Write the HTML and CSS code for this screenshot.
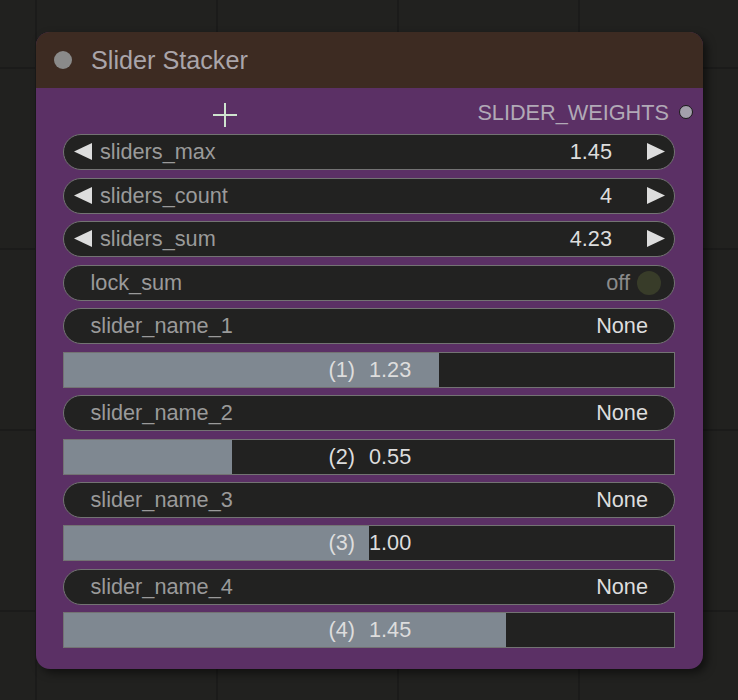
FILE: index.html
```html
<!DOCTYPE html>
<html>
<head>
<meta charset="utf-8">
<link rel="stylesheet" href="styles.css">
</head>
<body>
<div class="canvas">
  <div class="node">
    <div class="title">
      <span class="title-dot"></span>
      <span class="title-text">Slider Stacker</span>
    </div>
    <div class="body">
      <div class="slot-row">
        <svg class="plus" width="24" height="24" viewBox="0 0 24 24"><path d="M12 0V24M0 12H24" stroke="#cfe3cf" stroke-width="2"/></svg>
        <span class="out-label">SLIDER_WEIGHTS</span>
        <span class="out-dot"></span>
      </div>

      <div class="pill number">
        <svg class="arrow" width="18" height="18" viewBox="0 0 18 18"><polygon points="18,0 18,17 0,8.5" fill="#ddd"/></svg>
        <span class="label">sliders_max</span>
        <span class="value">1.45</span>
        <svg class="arrow right" width="18" height="18" viewBox="0 0 18 18"><polygon points="0,0 0,17 18,8.5" fill="#ddd"/></svg>
      </div>
      <div class="pill number">
        <svg class="arrow" width="18" height="18" viewBox="0 0 18 18"><polygon points="18,0 18,17 0,8.5" fill="#ddd"/></svg>
        <span class="label">sliders_count</span>
        <span class="value">4</span>
        <svg class="arrow right" width="18" height="18" viewBox="0 0 18 18"><polygon points="0,0 0,17 18,8.5" fill="#ddd"/></svg>
      </div>
      <div class="pill number">
        <svg class="arrow" width="18" height="18" viewBox="0 0 18 18"><polygon points="18,0 18,17 0,8.5" fill="#ddd"/></svg>
        <span class="label">sliders_sum</span>
        <span class="value">4.23</span>
        <svg class="arrow right" width="18" height="18" viewBox="0 0 18 18"><polygon points="0,0 0,17 18,8.5" fill="#ddd"/></svg>
      </div>
      <div class="pill toggle">
        <span class="label">lock_sum</span>
        <span class="off">off</span>
        <span class="knob"></span>
      </div>

      <div class="pill combo">
        <span class="label">slider_name_1</span>
        <span class="value">None</span>
      </div>
      <div class="slider">
        <div class="fill" style="width:61.5%"></div>
        <span class="s-label">(1)</span><span class="s-value">1.23</span>
      </div>

      <div class="pill combo">
        <span class="label">slider_name_2</span>
        <span class="value">None</span>
      </div>
      <div class="slider">
        <div class="fill" style="width:27.5%"></div>
        <span class="s-label">(2)</span><span class="s-value">0.55</span>
      </div>

      <div class="pill combo">
        <span class="label">slider_name_3</span>
        <span class="value">None</span>
      </div>
      <div class="slider">
        <div class="fill" style="width:50%"></div>
        <span class="s-label">(3)</span><span class="s-value">1.00</span>
      </div>

      <div class="pill combo">
        <span class="label">slider_name_4</span>
        <span class="value">None</span>
      </div>
      <div class="slider">
        <div class="fill" style="width:72.5%"></div>
        <span class="s-label">(4)</span><span class="s-value">1.45</span>
      </div>
    </div>
  </div>
</div>
</body>
</html>
```
FILE: styles.css
```css
html, body {
  margin: 0;
  padding: 0;
}
body {
  width: 738px;
  height: 700px;
  overflow: hidden;
  background-color: #21211f;
  background-image:
    linear-gradient(to right, #1b1b1a 2px, transparent 2px),
    linear-gradient(to bottom, #1b1b1a 2px, transparent 2px);
  background-size: 181px 181px;
  background-position: 35px 67px;
  font-family: "Liberation Sans", Arial, sans-serif;
}
.canvas {
  padding: 32px 0 0 36px;
}
.node {
  width: 667px;
  height: 637px;
  border-radius: 14px;
  background: #5b3065;
  box-shadow: 4px 4px 8px rgba(0, 0, 0, 0.5);
  overflow: hidden;
}
.title {
  height: 56px;
  background: #3d2b22;
  display: flex;
  align-items: center;
  padding-left: 18px;
}
.title-dot {
  width: 18px;
  height: 18px;
  border-radius: 50%;
  background: #8a8a8a;
}
.title-text {
  margin-left: 19px;
  font-size: 25.2px;
  color: #aaa5aa;
}
.body {
  padding: 0 28px 0 27px;
  display: flex;
  flex-direction: column;
  gap: 7.45px;
}
.slot-row {
  height: 39px;
  display: flex;
  align-items: center;
  margin-right: -18px;
}
.plus {
  margin-left: 150px;
  margin-top: 14px;
}
.out-label {
  margin-left: auto;
  font-size: 21.7px;
  color: #b1a9b6;
  margin-top: 10px;
}
.out-dot {
  width: 12px;
  height: 12px;
  border-radius: 50%;
  background: #a3a0ab;
  border: 1.5px solid #1a1a1a;
  margin-left: 10px;
  margin-top: 9px;
}
.pill {
  height: 36px;
  box-sizing: border-box;
  border: 1.5px solid #737373;
  border-radius: 18px;
  background: #222221;
  display: flex;
  align-items: center;
  font-size: 21.7px;
}
.label {
  color: #9a9a9a;
}
.value {
  color: #dddddd;
  margin-left: auto;
}
.number {
  padding: 0 9px 0 10px;
}
.number .label {
  margin-left: 8px;
}
.number .arrow {
  flex: none;
}
.number .right {
  margin-left: 35px;
}
.toggle, .combo {
  padding: 0 26px 0 26.5px;
}
.toggle {
  padding-right: 13px;
}
.off {
  margin-left: auto;
  color: #8b8b8b;
}
.knob {
  width: 24px;
  height: 24px;
  border-radius: 50%;
  background: #383c29;
  margin-left: 7px;
}
.slider {
  position: relative;
  height: 36px;
  box-sizing: border-box;
  border: 1.5px solid #737373;
  background: #222221;
  display: grid;
  grid-template-columns: 1fr 1fr;
  align-items: center;
  font-size: 21.7px;
  color: #dddddd;
}
.fill {
  position: absolute;
  left: 0;
  top: 0;
  bottom: 0;
  background: #7f8891;
}
.s-label {
  position: relative;
  text-align: right;
  padding-right: 14px;
}
.s-value {
  position: relative;
  text-align: left;
}
```
